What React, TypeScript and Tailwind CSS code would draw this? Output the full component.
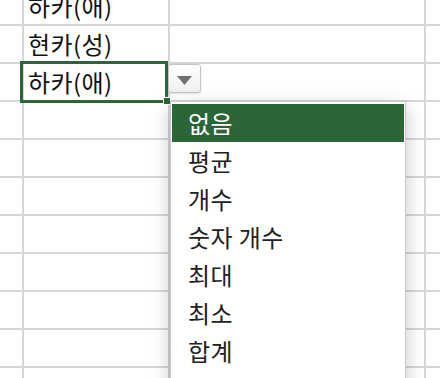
import React from "react";

const rows = ["하카(애)", "현카(성)", "하카(애)", "", "", "", "", "", "", "", ""];
const items = ["없음", "평균", "개수", "숫자 개수", "최대", "최소", "합계", "표본 표준 편차"];

export default function App() {
  return (
    <div
      className="relative w-[440px] h-[378px] overflow-hidden bg-white text-[#111]"
      style={{ fontFamily: '"Noto Sans CJK KR", "Noto Sans", sans-serif' }}
    >
      <div className="-mt-[12px] flex flex-col">
        {rows.map((t, i) => (
          <div key={i} className="flex h-[38px] shrink-0 border-b-2 border-[#d6d6d6]">
            <div className="w-[24px] shrink-0 border-r-2 border-[#d6d6d6]" />
            <div className="w-[146px] shrink-0 border-r-2 border-[#d6d6d6] flex items-center pl-[4px] text-[24px] leading-none tracking-[0.4px]">
              {t}
            </div>
            <div className="w-[256px] shrink-0 border-r-2 border-[#d6d6d6]" />
            <div className="flex-1" />
          </div>
        ))}
      </div>

      {/* selection border */}
      <div className="absolute left-[20px] top-[61px] w-[148px] h-[42px] border-[3px] border-[#2c6538]" />
      {/* fill handle */}
      <div className="absolute left-[163px] top-[97px] w-[8px] h-[8px] bg-[#2c6538] border border-white" />

      {/* dropdown button */}
      <div className="absolute left-[168px] top-[64px] w-[33px] h-[29px] rounded-[3px] border border-[#c4c4c4] bg-gradient-to-b from-white to-[#f0f0f0] flex items-center justify-center shadow-[0_1px_2px_rgba(0,0,0,0.12)]">
        <svg width="15" height="9" viewBox="0 0 15 9" className="mt-[3px]">
          <path d="M0 0 H15 L7.5 9 Z" fill="#707070" />
        </svg>
      </div>

      {/* menu */}
      <div className="absolute left-[170px] top-[101px] w-[236px] bg-white border border-[#c8c8c8] pt-[2px] px-[1px] shadow-[0_6px_18px_rgba(0,0,0,0.22)]">
        {items.map((it, i) => (
          <div
            key={i}
            className={
              "h-[38px] flex items-center pl-[16px] text-[24px] leading-none tracking-[0.4px] " +
              (i === 0 ? "bg-[#2c6538] text-white" : "text-[#222]")
            }
          >
            {it}
          </div>
        ))}
      </div>
    </div>
  );
}
